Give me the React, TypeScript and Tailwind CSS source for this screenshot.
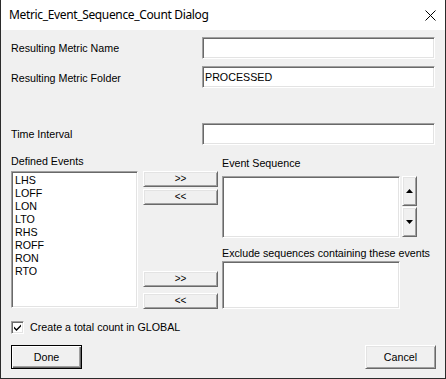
const raised =
  "border border-t-white border-l-white border-b-[#696969] border-r-[#696969] bg-[#f0f0f0] shadow-[inset_1px_1px_0_#e3e3e3,inset_-1px_-1px_0_#a0a0a0]";
const sunken =
  "border border-t-[#a0a0a0] border-l-[#a0a0a0] border-b-white border-r-white bg-white shadow-[inset_1px_1px_0_#696969,inset_-1px_-1px_0_#e3e3e3]";

const events = ["LHS", "LOFF", "LON", "LTO", "RHS", "ROFF", "RON", "RTO"];

function Field({ value = "" }: { value?: string }) {
  return (
    <div className={`${sunken} ml-auto mr-[10px] flex h-[22px] w-[233px] items-center px-[2px]`}>
      {value}
    </div>
  );
}

function SmallButton({ label }: { label: string }) {
  return (
    <button className={`${raised} flex h-[16px] w-[75px] items-center justify-center text-[10px] leading-none`}>
      {label}
    </button>
  );
}

function Arrow({ up }: { up?: boolean }) {
  return (
    <button className={`${raised} flex h-[30px] w-[15px] items-center justify-center`}>
      <svg width="7" height="4" viewBox="0 0 7 4">
        {up ? <polygon points="3.5,0 7,4 0,4" fill="#000" /> : <polygon points="0,0 7,0 3.5,4" fill="#000" />}
      </svg>
    </button>
  );
}

export default function App() {
  return (
    <div
      className="flex h-[379px] w-[446px] flex-col border-x border-b border-[#2b2b2b] bg-[#f0f0f0] text-[10.7px] text-black"
      style={{ fontFamily: '"Liberation Sans", Arial, sans-serif' }}
    >
      <div className="flex h-[30px] items-center justify-between bg-white pl-[8px] pr-[9px]">
        <span className="text-[12px] tracking-[-0.35px] text-black" style={{ fontFamily: '"Noto Sans", sans-serif' }}>
          Metric_Event_Sequence_Count Dialog
        </span>
        <svg width="11" height="11" viewBox="0 0 11 11">
          <path d="M0.5 0.5L10.5 10.5M10.5 0.5L0.5 10.5" stroke="#000" strokeWidth="1" />
        </svg>
      </div>

      <div className="flex flex-1 flex-col pl-[10px]">
        <div className="mt-[7px] flex items-center">
          <span>Resulting Metric Name</span>
          <Field />
        </div>
        <div className="mt-[7px] flex items-center">
          <span className="pt-[2px]">Resulting Metric Folder</span>
          <Field value="PROCESSED" />
        </div>
        <div className="mt-[35px] flex items-center">
          <span>Time Interval</span>
          <Field />
        </div>

        <div className="flex items-start">
          <div className="flex w-[127px] flex-col">
            <span className="mt-[10px] h-[13px] leading-[13px]">Defined Events</span>
            <div className={`${sunken} mt-[3px] h-[137px] px-[3px] pt-[2px]`}>
              {events.map((e) => (
                <div key={e} className="h-[13px] leading-[13px]">
                  {e}
                </div>
              ))}
            </div>
          </div>

          <div className="ml-[5px] flex flex-col pt-[26px]">
            <SmallButton label=">>" />
            <div className="mt-[2px]">
              <SmallButton label="<<" />
            </div>
            <div className="mt-[66px]">
              <SmallButton label=">>" />
            </div>
            <div className="mt-[6px]">
              <SmallButton label="<<" />
            </div>
          </div>

          <div className="ml-[4px] flex flex-col">
            <span className="mt-[12px] h-[13px] leading-[13px]">Event Sequence</span>
            <div className="mt-[6px] flex items-start">
              <div className={`${sunken} h-[62px] w-[178px]`} />
              <div className="ml-[2px] flex flex-col gap-[1px]">
                <Arrow up />
                <Arrow />
              </div>
            </div>
            <span className="mt-[9px] h-[13px] leading-[13px]">Exclude sequences containing these events</span>
            <div className={`${sunken} mt-[1px] h-[48px] w-[178px]`} />
          </div>
        </div>

        <div className="mt-[12px] flex h-[13px] items-center">
          <div className={`${sunken} flex h-[13px] w-[13px] items-center justify-center`}>
            <svg width="7" height="7" viewBox="0 0 7 7">
              <path d="M0 2.5L2.5 5L7 0.5L7 2.5L2.5 7L0 4.5Z" fill="#000" />
            </svg>
          </div>
          <span className="ml-[6px]">Create a total count in GLOBAL</span>
        </div>

        <div className="mt-[11px] flex justify-between pr-[9px]">
          <button className="h-[24px] w-[71px] border border-black bg-[#f0f0f0] shadow-[inset_1px_1px_0_#fff,inset_-1px_-1px_0_#696969,inset_-2px_-2px_0_#a0a0a0]">
            Done
          </button>
          <button className={`${raised} h-[24px] w-[71px]`}>Cancel</button>
        </div>
      </div>
    </div>
  );
}
